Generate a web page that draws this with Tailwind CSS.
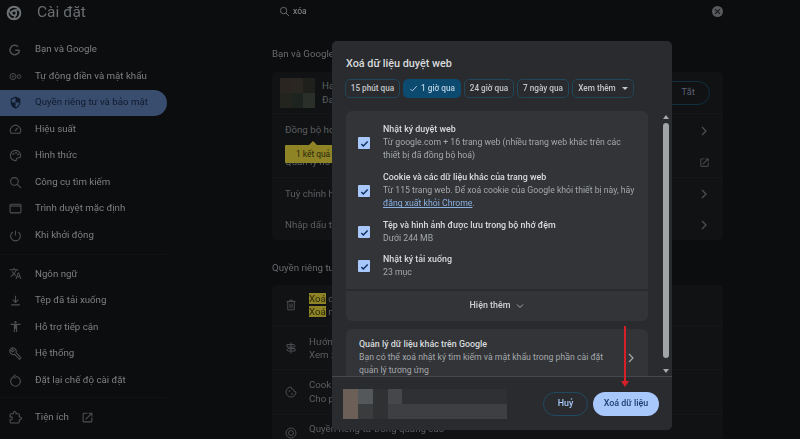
<!DOCTYPE html>
<html lang="vi">
<head>
<meta charset="utf-8">
<title>Cài đặt</title>
<script src="https://cdn.jsdelivr.net/npm/@tailwindcss/browser@4"></script>
</head>
<body class="m-0 bg-[#0c0d0e]">
<div class="relative w-[800px] h-[439px] overflow-hidden bg-[#0c0d0e] font-['Roboto',sans-serif] text-[9.7px] text-[#7d8083]">

  <div class="flex h-full blur-[0.4px]">
    <!-- Sidebar -->
    <aside class="w-[272px] shrink-0 flex flex-col">
      <div class="h-[26px] flex items-center pl-[6px] gap-[15px]">
        <svg class="w-[16px] h-[16px]" viewBox="0 0 24 24" fill="none" stroke="#6f7275"><circle cx="12" cy="12" r="9.5" stroke-width="3"/><circle cx="12" cy="12" r="3.6" stroke-width="2.4"/><path d="M12 7.5h9M8 14l-4.5-7.5M15.5 14l-4.5 8" stroke-width="2"/></svg>
        <span class="text-[15.5px] text-[#6b6e71]">Cài đặt</span>
      </div>
      <nav class="flex flex-col pt-[10.5px] w-[167px]">
        <a class="h-[26.5px] flex items-center pl-[9px] gap-[10px]"><svg class="w-[12px] h-[12px]" viewBox="0 0 24 24" fill="none" stroke="#4d5052" stroke-width="3"><path d="M21 12.5H12.5M21 12.5a9.5 9.5 0 1 1-2.8-7.2"/></svg><span class="ml-[4px]">Bạn và Google</span></a>
        <a class="h-[26.5px] flex items-center pl-[9px] gap-[10px]"><svg class="w-[13px] h-[13px] -ml-[.5px]" viewBox="0 0 26 24" fill="none" stroke="#4d5052" stroke-width="2"><circle cx="8" cy="12" r="6"/><circle cx="8" cy="12" r="1.5"/><circle cx="20" cy="12" r="3.5"/></svg><span class="ml-[3.5px]">Tự động điền và mật khẩu</span></a>
        <a class="h-[26.5px] flex items-center pl-[9px] gap-[10px] bg-[#394d6e] rounded-r-full text-[#0f1a2c]"><svg class="w-[13px] h-[13px]" viewBox="0 0 24 24" fill="#0f1a2c"><path d="M12 1 3 5v6c0 5.55 3.84 10.74 9 12 5.16-1.26 9-6.45 9-12V5l-9-4zm0 11H5V6.3l7-3.1V12zm0 0h7c-.5 4.1-3.3 7.8-7 8.9V12z"/></svg><span class="ml-[3px]">Quyền riêng tư và bảo mật</span></a>
        <a class="h-[26.5px] flex items-center pl-[9px] gap-[10px]"><svg class="w-[13px] h-[13px]" viewBox="0 0 24 24" fill="none" stroke="#4d5052" stroke-width="2"><path d="M4 19h16a9.5 9.5 0 1 0-16 0zM11 15l5-6"/></svg><span class="ml-[3px]">Hiệu suất</span></a>
        <a class="h-[26.5px] flex items-center pl-[9px] gap-[10px]"><svg class="w-[13px] h-[13px]" viewBox="0 0 24 24" fill="none" stroke="#4d5052" stroke-width="2"><path d="M12 2.5a9.5 9.5 0 0 0 0 19c1.5 0 2-1 1.6-2-.6-1.5.2-3 2-3h2.4c2 0 3.5-1.5 3.5-3.5 0-6-4.500-10.500-9.500-10.500z"/><circle cx="8" cy="9" r=".8"/><circle cx="13" cy="7" r=".8"/><circle cx="17" cy="10" r=".8"/></svg><span class="ml-[3px]">Hình thức</span></a>
        <a class="h-[26.5px] flex items-center pl-[9px] gap-[10px]"><svg class="w-[13px] h-[13px]" viewBox="0 0 24 24" fill="none" stroke="#4d5052" stroke-width="2"><circle cx="10" cy="10" r="7"/><path d="m15 15 7 7"/></svg><span class="ml-[3px]">Công cụ tìm kiếm</span></a>
        <a class="h-[26.5px] flex items-center pl-[9px] gap-[10px]"><svg class="w-[13px] h-[13px]" viewBox="0 0 24 24" fill="none" stroke="#4d5052" stroke-width="2"><rect x="2" y="4" width="20" height="16" rx="2"/><path d="M2 7.500h20"/></svg><span class="ml-[3px]">Trình duyệt mặc định</span></a>
        <a class="h-[26.5px] flex items-center pl-[9px] gap-[10px]"><svg class="w-[13px] h-[13px]" viewBox="0 0 24 24" fill="none" stroke="#4d5052" stroke-width="2"><path d="M12 3v9M7 5.500a9 9 0 1 0 10 0"/></svg><span class="ml-[3px]">Khi khởi động</span></a>
      </nav>
      <div class="h-px w-[167px] bg-[#121314] mt-[5px] mb-[6px]"></div>
      <nav class="flex flex-col w-[167px]">
        <a class="h-[26.6px] flex items-center pl-[9px] gap-[10px]"><svg class="w-[13px] h-[13px]" viewBox="0 0 24 24" fill="#4d5052"><path d="M12.87 15.07l-2.54-2.51.03-.03c1.74-1.94 2.98-4.17 3.71-6.53H17V4h-7V2H8v2H1v1.99h11.17C11.5 7.92 10.44 9.75 9 11.35 8.07 10.32 7.3 9.19 6.69 8h-2c.73 1.63 1.73 3.17 2.98 4.56l-5.09 5.02L4 19l5-5 3.11 3.11.76-2.04zM18.5 10h-2L12 22h2l1.12-3h4.75L21 22h2l-4.5-12zm-2.62 7l1.62-4.33L19.12 17h-3.24z"/></svg><span class="ml-[3px]">Ngôn ngữ</span></a>
        <a class="h-[26.6px] flex items-center pl-[9px] gap-[10px]"><svg class="w-[13px] h-[13px]" viewBox="0 0 24 24" fill="none" stroke="#4d5052" stroke-width="2"><path d="M12 3v12M7 10.500l5 5 5-5M4 20h16"/></svg><span class="ml-[3px]">Tệp đã tải xuống</span></a>
        <a class="h-[26.6px] flex items-center pl-[9px] gap-[10px]"><svg class="w-[13px] h-[13px]" viewBox="0 0 24 24" fill="#4d5052"><path d="M12 2c1.1 0 2 .9 2 2s-.9 2-2 2-2-.9-2-2 .9-2 2-2zm9 7h-6v13h-2v-6h-2v6H9V9H3V7h18v2z"/></svg><span class="ml-[3px]">Hỗ trợ tiếp cận</span></a>
        <a class="h-[26.6px] flex items-center pl-[9px] gap-[10px]"><svg class="w-[13px] h-[13px]" viewBox="0 0 24 24" fill="none" stroke="#4d5052" stroke-width="2"><path d="M22 19.500l-9.100-9.100c.9-2.300.4-5-1.500-6.900-2-2-5-2.400-7.400-1.300L9 6.500 6.500 9 2.200 4.700C1 7.100 1.500 10.100 3.500 12.100c1.900 1.900 4.600 2.400 6.900 1.500l9.100 9.100z"/></svg><span class="ml-[3px]">Hệ thống</span></a>
        <a class="h-[26.6px] flex items-center pl-[9px] gap-[10px]"><svg class="w-[13px] h-[13px]" viewBox="0 0 24 24" fill="none" stroke="#4d5052" stroke-width="2"><path d="M7 6a9 9 0 1 0 5-1.500M12 1 8 5l4 3"/></svg><span class="ml-[3px]">Đặt lại chế độ cài đặt</span></a>
      </nav>
      <div class="h-px w-[167px] bg-[#121314] mt-[4px] mb-[6px]"></div>
      <a class="h-[26.6px] w-[167px] flex items-center pl-[9px] gap-[10px]"><svg class="w-[13px] h-[13px]" viewBox="0 0 24 24" fill="none" stroke="#4d5052" stroke-width="2"><path d="M20.500 11H19V7c0-1.100-.9-2-2-2h-4V3.500C13 2.120 11.880 1 10.500 1S8 2.120 8 3.500V5H4c-1.100 0-2 .9-2 2v3.800h1.500c1.500 0 2.700 1.200 2.700 2.700s-1.200 2.700-2.700 2.700H2V20c0 1.100.9 2 2 2h13c1.100 0 2-.9 2-2v-4h1.500c1.400 0 2.500-1.100 2.500-2.500S21.900 11 20.500 11z"/></svg><span class="ml-[3px]">Tiện ích</span><svg class="w-[13px] h-[13px] ml-[2px]" viewBox="0 0 24 24" fill="#4d5052"><path d="M19 19H5V5h7V3H5c-1.110 0-2 .9-2 2v14c0 1.100.89 2 2 2h14c1.100 0 2-.9 2-2v-7h-2v7zM14 3v2h3.590l-9.830 9.830 1.410 1.410L19 6.410V10h2V3h-7z"/></svg></a>
    </aside>

    <!-- Main -->
    <main class="w-[451px] shrink-0 flex flex-col">
      <div class="h-[25px] flex items-center pl-[7px] gap-[3px] relative">
        <svg class="w-[11px] h-[11px]" viewBox="0 0 24 24" fill="none" stroke="#6d7073" stroke-width="2"><circle cx="10" cy="10" r="7"/><path d="m15 15 7 7"/></svg>
        <span class="text-[8.5px] text-[#8e9194]">xóa</span>
        <span class="ml-auto w-[11px] h-[11px] rounded-full bg-[#585a5d] flex items-center justify-center"><svg class="w-[7px] h-[7px]" viewBox="0 0 10 10" stroke="#151617" stroke-width="1.600"><path d="m1.500 1.500 7 7m0-7-7 7"/></svg></span>
      </div>
      <h2 class="mt-[26px] h-[12px] leading-[12px] text-[#686b6e]">Bạn và Google</h2>
      <section class="mt-[12px] h-[168px] shrink-0 bg-[#101213] rounded-[4px] flex flex-col text-[#5c5f62] relative">
        <div class="h-[41px] flex items-center pl-[8px] pr-[13px]">
          <div class="w-[35px] h-[30px] grid grid-cols-3 grid-rows-2 shrink-0">
            <div class="bg-[#2a2521]"></div><div class="bg-[#2a2622]"></div><div class="bg-[#1f1f1c]"></div>
            <div class="bg-[#24241f]"></div><div class="bg-[#1d231e]"></div><div class="bg-[#2b2f2a]"></div>
          </div>
          <div class="pl-[7px] leading-[14px] flex flex-col"><span>Ha</span><span>Đa</span></div>
          <span class="ml-auto w-[52px] h-[24px] border border-[#10303f] rounded-full flex items-center justify-end pr-[14px] text-[#5b5e70]">Tắt</span>
        </div>
        <div class="h-[34px] flex items-center justify-between pl-[13px] pr-[15px] border-t border-[#141617]"><span>Đồng bộ hoá</span><svg class="w-[8px] h-[10px]" viewBox="0 0 8 10" fill="none" stroke="#4d5052" stroke-width="1.300"><path d="m2 1 4 4-4 4"/></svg></div>
        <div class="h-[31px] flex items-center justify-between pl-[13px] pr-[13px] border-b border-[#141617]"><span>Quản lý hồ sơ</span><svg class="w-[11px] h-[11px]" viewBox="0 0 24 24" fill="#4d5052"><path d="M19 19H5V5h7V3H5c-1.110 0-2 .9-2 2v14c0 1.100.89 2 2 2h14c1.100 0 2-.9 2-2v-7h-2v7zM14 3v2h3.590l-9.830 9.830 1.410 1.410L19 6.410V10h2V3h-7z"/></svg></div>
        <div class="h-[32px] flex items-center justify-between pl-[13px] pr-[15px]"><span>Tuỳ chỉnh hồ sơ</span><svg class="w-[8px] h-[10px]" viewBox="0 0 8 10" fill="none" stroke="#4d5052" stroke-width="1.300"><path d="m2 1 4 4-4 4"/></svg></div>
        <div class="h-[30px] flex items-center justify-between pl-[13px] pr-[15px]"><span>Nhập dấu trang</span><svg class="w-[8px] h-[10px]" viewBox="0 0 8 10" fill="none" stroke="#4d5052" stroke-width="1.300"><path d="m2 1 4 4-4 4"/></svg></div>
        <div class="absolute left-[13px] top-[73px] w-[60px] h-[18px] bg-[#8e8426] rounded-[1px] pl-[11px] flex items-center text-[#2a2708] text-[8.4px]">1 kết quả</div>
        <div class="absolute left-[37px] top-[69px] w-0 h-0 border-x-[4px] border-x-transparent border-b-[4px] border-b-[#8e8426]"></div>
      </section>
      <h2 class="mt-[21px] h-[14px] leading-[14px] text-[#686b6e]">Quyền riêng tư và bảo mật</h2>
      <section class="mt-[10px] flex-1 bg-[#101213] rounded-t-[4px] flex flex-col text-[#5c5f62]">
        <div class="h-[41px] shrink-0 flex items-center pl-[13px] gap-[12px] border-b border-[#141617]">
          <svg class="w-[12px] h-[12px]" viewBox="0 0 24 24" fill="none" stroke="#4a4d50" stroke-width="2"><path d="M3 5h18M9 5V2.500h6V5M5.500 5v16.500h13V5M10 9v9M14 9v9"/></svg>
          <div class="flex flex-col leading-[13px]"><span><mark class="bg-[#8e8426] text-[#2a2708]">Xoá</mark> dữ liệu duyệt web</span><span><mark class="bg-[#8e8426] text-[#2a2708]">Xoá</mark> nhật ký</span></div>
        </div>
        <div class="h-[44px] shrink-0 flex items-center pl-[13px] gap-[12px] border-b border-[#141617]">
          <svg class="w-[12px] h-[12px]" viewBox="0 0 24 24" fill="none" stroke="#4a4d50" stroke-width="2"><path d="M12 1v22M4 5h14l2.500 2.500L18 10H4zM20 13H6l-2.500 2.500L6 18h14z"/></svg>
          <div class="flex flex-col leading-[13px]"><span>Hướng dẫn</span><span>Xem xét</span></div>
        </div>
        <div class="h-[45px] shrink-0 flex items-center pl-[13px] gap-[12px] border-b border-[#141617]">
          <svg class="w-[12px] h-[12px]" viewBox="0 0 24 24" fill="none" stroke="#4a4d50" stroke-width="2"><path d="M12 2a10 10 0 1 0 10 10 5 5 0 0 1-5-5 5 5 0 0 1-5-5z"/><circle cx="9" cy="10" r="1"/><circle cx="14" cy="16" r="1"/></svg>
          <div class="flex flex-col leading-[14px]"><span>Cookie</span><span>Cho phép</span></div>
        </div>
        <div class="flex items-start pl-[13px] gap-[12px] pt-[7px]">
          <svg class="w-[12px] h-[12px] mt-[5px]" viewBox="0 0 24 24" fill="none" stroke="#4a4d50" stroke-width="2"><circle cx="12" cy="12" r="10"/><circle cx="12" cy="12" r="5"/></svg>
          <span class="leading-[13px]">Quyền riêng tư trong quảng cáo</span>
        </div>
      </section>
    </main>
  </div>

  <!-- Dialog -->
  <div role="dialog" class="absolute left-[332px] top-[41px] w-[340px] h-[389px] bg-[#292b2e] rounded-[5px] flex flex-col text-[#a5a8ab] blur-[0.4px]">
    <h1 class="pl-[14px] pt-[16px] h-[38px] text-[10.8px] leading-[14px] font-medium text-[#d9dbdd]">Xoá dữ liệu duyệt web</h1>
    <div class="flex pl-[13px] h-[19px] shrink-0 gap-[3px] text-[8.2px] font-medium text-[#c3c6c9]">
      <span class="w-[55px] border border-[#20485c] rounded-[5px] flex items-center justify-center">15 phút qua</span>
      <span class="w-[58px] bg-[#0c4a6f] rounded-[5px] flex items-center justify-center gap-[3px] text-[#b9cfe2]"><svg class="w-[9px] h-[9px]" viewBox="0 0 10 10" fill="none" stroke="#b9cfe2"><path d="m1.500 5.500 2.200 2.200 5-5.400"/></svg>1 giờ qua</span>
      <span class="w-[50px] border border-[#20485c] rounded-[5px] flex items-center justify-center">24 giờ qua</span>
      <span class="w-[52px] border border-[#20485c] rounded-[5px] flex items-center justify-center">7 ngày qua</span>
      <span class="w-[62px] border border-[#20485c] rounded-[5px] flex items-center justify-center gap-[6px]">Xem thêm<span class="w-0 h-0 border-x-[3px] border-x-transparent border-t-[3px] border-t-[#c3c6c9]"></span></span>
    </div>

    <div class="mt-[13px] flex-1 min-h-0 flex relative overflow-hidden">
      <div class="ml-[14px] w-[302px] flex flex-col">
        <div class="h-[178px] shrink-0 bg-[#323438] rounded-t-[6px] pl-[12px] pt-[12px] flex flex-col leading-[13.2px] text-[8.7px]">
          <div class="h-[48px] flex items-start">
            <span class="mt-[14px] w-[12px] h-[12px] bg-[#a8c7fa] rounded-[1px] flex items-center justify-center shrink-0"><svg class="w-[9px] h-[9px]" viewBox="0 0 10 10" fill="none" stroke="#0b2a58" stroke-width="1.500"><path d="m1.500 5.500 2.200 2.200 4.800-5"/></svg></span>
            <div class="ml-[13px] flex flex-col"><b class="font-medium text-[8.9px] text-[#d9dbdd]">Nhật ký duyệt web</b><span class="w-[245px]">Từ google.com + 16 trang web (nhiều trang web khác trên các thiết bị đã đồng bộ hoá)</span></div>
          </div>
          <div class="h-[48px] flex items-start">
            <span class="mt-[14px] w-[12px] h-[12px] bg-[#a8c7fa] rounded-[1px] flex items-center justify-center shrink-0"><svg class="w-[9px] h-[9px]" viewBox="0 0 10 10" fill="none" stroke="#0b2a58" stroke-width="1.500"><path d="m1.500 5.500 2.200 2.200 4.800-5"/></svg></span>
            <div class="ml-[13px] flex flex-col"><b class="font-medium text-[8.9px] text-[#d9dbdd]">Cookie và các dữ liệu khác của trang web</b><span>Từ 115 trang web. Để xoá cookie của Google khỏi thiết bị này, hãy</span><span><a class="underline text-[#8ab0e0]">đăng xuất khỏi Chrome</a>.</span></div>
          </div>
          <div class="h-[34px] flex items-start">
            <span class="mt-[7px] w-[12px] h-[12px] bg-[#a8c7fa] rounded-[1px] flex items-center justify-center shrink-0"><svg class="w-[9px] h-[9px]" viewBox="0 0 10 10" fill="none" stroke="#0b2a58" stroke-width="1.500"><path d="m1.500 5.500 2.200 2.200 4.800-5"/></svg></span>
            <div class="ml-[13px] flex flex-col"><b class="font-medium text-[8.9px] text-[#d9dbdd]">Tệp và hình ảnh được lưu trong bộ nhớ đệm</b><span>Dưới 244 MB</span></div>
          </div>
          <div class="flex items-start">
            <span class="mt-[7px] w-[12px] h-[12px] bg-[#a8c7fa] rounded-[1px] flex items-center justify-center shrink-0"><svg class="w-[9px] h-[9px]" viewBox="0 0 10 10" fill="none" stroke="#0b2a58" stroke-width="1.500"><path d="m1.500 5.500 2.200 2.200 4.800-5"/></svg></span>
            <div class="ml-[13px] flex flex-col"><b class="font-medium text-[8.9px] text-[#d9dbdd]">Nhật ký tải xuống</b><span>23 mục</span></div>
          </div>
        </div>
        <div class="mt-[2px] h-[30px] shrink-0 bg-[#323438] rounded-b-[6px] flex items-center justify-center gap-[6px] text-[8.9px] font-medium text-[#d0d2d5]">Hiện thêm<svg class="w-[8px] h-[6px]" viewBox="0 0 8 6" fill="none" stroke="#a5a8ab"><path d="m1 1.500 3 3 3-3"/></svg></div>
        <div class="mt-[8px] h-[60px] bg-[#323438] rounded-t-[6px] pl-[13px] pt-[9px] flex justify-between leading-[13.2px] text-[8.7px] shrink-0">
          <div class="flex flex-col w-[250px]"><b class="font-medium text-[8.9px] text-[#d9dbdd]">Quản lý dữ liệu khác trên Google</b><span>Bạn có thể xoá nhật ký tìm kiếm và mật khẩu trong phần cài đặt quản lý tương ứng</span></div>
          <svg class="w-[8px] h-[10px] mt-[15px] mr-[13px]" viewBox="0 0 8 10" fill="none" stroke="#a5a8ab" stroke-width="1.200"><path d="m2 1 4 4-4 4"/></svg>
        </div>
      </div>
      <div class="ml-[14px] w-[8px] flex flex-col items-center pt-[4px]">
        <span class="w-0 h-0 border-x-[3.500px] border-x-transparent border-b-[4px] border-b-[#a7aaac]"></span>
        <span class="mt-[4px] w-[5.500px] h-[235px] shrink-0 rounded-full bg-[#a2a5a7]"></span>
        <span class="mt-[11px] w-0 h-0 border-x-[3.500px] border-x-transparent border-t-[4px] border-t-[#a7aaac]"></span>
      </div>
    </div>

    <footer class="h-[54px] shrink-0 border-t border-[#45474a] bg-[#292b2e] rounded-b-[5px] flex items-center pl-[11px] pr-[13px]">
      <div class="flex w-[164px] h-[30px]">
        <div class="w-[15px] bg-[#6b5f58]"></div>
        <div class="w-[15px] flex flex-col"><div class="h-[15px] bg-[#55585a]"></div><div class="flex-1 bg-[#3a3c3d]"></div></div>
        <div class="w-[15px] bg-[#2f3133]"></div>
        <div class="w-[14px] flex flex-col"><div class="h-[15px] bg-[#45474a]"></div><div class="flex-1 bg-[#3d3f42]"></div></div>
        <div class="flex-1 flex flex-col"><div class="h-[15px] bg-[#2e3033]"></div><div class="flex-1 bg-[#3d3f42]"></div></div>
      </div>
      <button class="ml-auto w-[45px] h-[24px] border border-[#1f4a60] rounded-full text-[8.9px] font-medium text-[#a8c7fa]">Huỷ</button>
      <button class="ml-[5px] w-[66px] h-[24px] rounded-full bg-[#a8c7fa] text-[8.9px] font-medium text-[#1c3d70]">Xoá dữ liệu</button>
    </footer>
  </div>

  <!-- red annotation arrow -->
  <svg class="absolute left-[619px] top-[326px] w-[12px] h-[62px]" viewBox="0 0 12 62" fill="#d61f26"><rect x="5" y="0" width="2" height="56"/><path d="M2 55h8l-4 6z"/></svg>
</div>
</body>
</html>
